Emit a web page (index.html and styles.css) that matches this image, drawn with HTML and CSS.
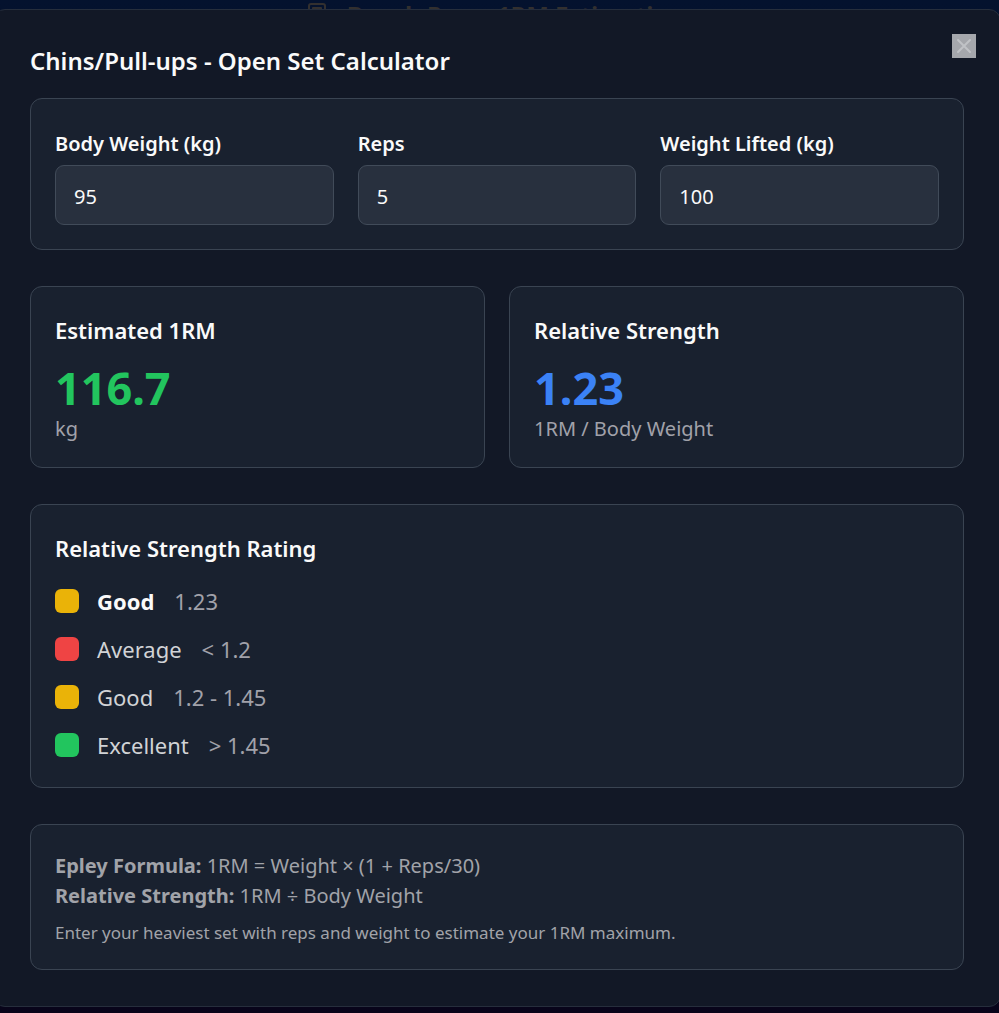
FILE: index.html
```html
<!DOCTYPE html>
<html lang="en">
<head>
<meta charset="utf-8">
<title>Open Set Calculator</title>
<link rel="stylesheet" href="styles.css">
</head>
<body>
<div class="backdrop" aria-hidden="true">
  <svg class="backdrop-icon" viewBox="0 0 24 24" fill="none" stroke="currentColor" stroke-width="2" stroke-linecap="round" stroke-linejoin="round"><rect x="4" y="2" width="16" height="20" rx="2"/><path d="M8 6h8v1H8z"/></svg>
  <span>Bench Press 1RM Estimation</span>
</div>
<main class="dialog" role="dialog" aria-labelledby="title">
  <h1 class="title" id="title">Chins/Pull-ups - Open Set Calculator</h1>
  <button class="close" type="button" aria-label="Close">
    <svg viewBox="0 0 24 24" fill="none" stroke="currentColor" stroke-width="2" stroke-linecap="round"><path d="M18 6 6 18M6 6l12 12"/></svg>
  </button>
  <div class="stack">
    <form class="card fields">
      <div class="field"><label for="body">Body Weight (kg)</label><input id="body" type="text" inputmode="decimal" value="95"></div>
      <div class="field"><label for="reps">Reps</label><input id="reps" type="text" inputmode="numeric" value="5"></div>
      <div class="field"><label for="lifted">Weight Lifted (kg)</label><input id="lifted" type="text" inputmode="decimal" value="100"></div>
    </form>
    <div class="results">
      <section class="card">
        <h2 class="heading">Estimated 1RM</h2>
        <p class="figure green-text">116.7</p>
        <p class="unit">kg</p>
      </section>
      <section class="card">
        <h2 class="heading">Relative Strength</h2>
        <p class="figure blue-text">1.23</p>
        <p class="unit">1RM / Body Weight</p>
      </section>
    </div>
    <section class="card">
      <h2 class="heading">Relative Strength Rating</h2>
      <ul class="ratings">
        <li class="rating current"><span class="swatch yellow"></span><span class="name">Good</span><span class="range">1.23</span></li>
        <li class="rating"><span class="swatch red"></span><span class="name">Average</span><span class="range">&lt; 1.2</span></li>
        <li class="rating"><span class="swatch yellow"></span><span class="name">Good</span><span class="range">1.2 - 1.45</span></li>
        <li class="rating"><span class="swatch green"></span><span class="name">Excellent</span><span class="range">&gt; 1.45</span></li>
      </ul>
    </section>
    <section class="card notes">
      <p><strong>Epley Formula:</strong> 1RM = Weight × (1 + Reps/30)</p>
      <p><strong>Relative Strength:</strong> 1RM ÷ Body Weight</p>
      <p class="hint">Enter your heaviest set with reps and weight to estimate your 1RM maximum.</p>
    </section>
  </div>
</main>
</body>
</html>
```
FILE: styles.css
```css
* { box-sizing: border-box; }
body, h1, h2, p, ul { margin: 0; padding: 0; }
body {
  position: relative;
  min-height: 100vh;
  padding-top: 9px;
  overflow: hidden;
  background: linear-gradient(#04122e, #08041a);
  color: #fafafa;
  font-family: "Noto Sans", "Open Sans", sans-serif;
  font-size: 22px;
}
.backdrop {
  position: absolute;
  top: 0;
  left: 0;
  right: 0;
  display: flex;
  justify-content: center;
  align-items: flex-start;
  gap: 18px;
  padding-right: 10px;
  color: #33302f;
  font-size: 24px;
  font-weight: 700;
  line-height: 30px;
}
.backdrop-icon { width: 24px; height: 24px; margin-top: 2px; }
.dialog {
  position: relative;
  margin: 0 -2px 0 -7px;
  padding: 36px;
  border: 1px solid #262e3c;
  border-radius: 12px;
  background: #121826;
}
.title {
  margin-bottom: 22px;
  font-size: 24px;
  font-weight: 600;
  line-height: 30px;
}
.close {
  position: absolute;
  top: 24px;
  right: 24px;
  display: grid;
  place-items: center;
  width: 24px;
  height: 24px;
  padding: 0;
  border: 0;
  background: #a5a7ac;
  color: #c0c2c6;
}
.close svg { width: 24px; height: 24px; }
.stack { display: grid; gap: 36px; }
.card {
  padding: 24px;
  border: 1px solid #3a4452;
  border-radius: 12px;
  background: #19212f;
}
.fields { display: grid; grid-template-columns: repeat(3, 1fr); gap: 24px; }
.field label {
  display: block;
  font-size: 20px;
  font-weight: 600;
  line-height: 42px;
}
.field input {
  display: block;
  width: 100%;
  height: 60px;
  padding: 2px 18px 0;
  border: 1px solid #414b59;
  border-radius: 9px;
  background: #28303e;
  color: #fafafa;
  font: inherit;
  font-size: 20px;
}
.results { display: grid; grid-template-columns: 1fr 1fr; gap: 24px; }
.heading {
  font-size: 22px;
  font-weight: 600;
  line-height: 38px;
}
.figure {
  margin-top: 14px;
  font-size: 45px;
  font-weight: 700;
  line-height: 50px;
}
.unit { padding-top: 2px; color: #a1a1aa; font-size: 20px; line-height: 28px; }
.green-text { color: #22c55e; }
.blue-text { color: #3b82f6; }
.ratings { display: grid; gap: 12px; margin-top: 16px; list-style: none; }
.rating { display: flex; align-items: center; gap: 18px; line-height: 36px; }
.name { color: #d1d3d6; }
.range { padding-left: 2px; color: #a1a1aa; }
.current .name { color: #fafafa; font-weight: 700; }
.swatch { width: 24px; height: 24px; border-radius: 6px; }
.yellow { background: #eab308; }
.red { background: #ef4444; }
.green { background: #22c55e; }
.notes { padding-top: 26px; color: #a1a3a9; font-size: 20px; line-height: 30px; }
.notes .hint { margin-top: 10px; font-size: 17px; line-height: 24px; }
```
